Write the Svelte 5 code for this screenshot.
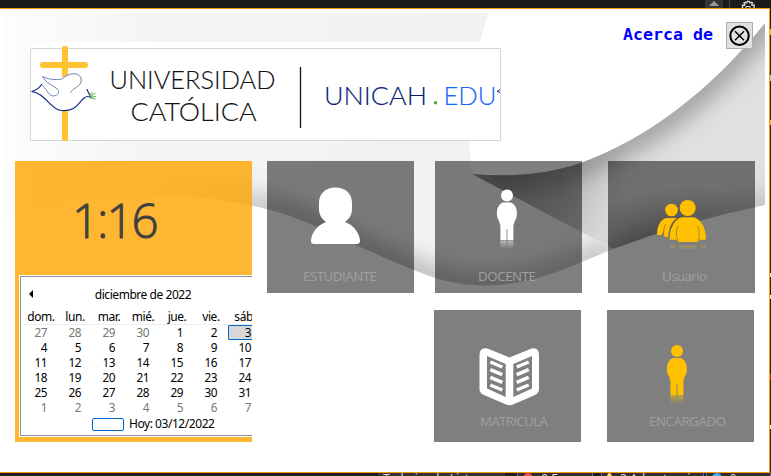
<script>
  const weekdays = ['dom.', 'lun.', 'mar.', 'mié.', 'jue.', 'vie.', 'sáb.'];
  const days = [27, 28, 29, 30, ...Array.from({ length: 31 }, (_, i) => i + 1), 1, 2, 3, 4, 5, 6, 7];
  const tiles = [
    { label: 'ESTUDIANTE', icon: 'student', x: 36, y: 120, width: 74 },
    { label: 'DOCENTE', icon: 'person', x: 43, y: 120, width: 58 },
    { label: 'Usuario', icon: 'users', x: 54, y: 120, width: 45 },
    { label: 'MATRICULA', icon: 'book', x: 46, y: 116, width: 68 },
    { label: 'ENCARGADO', icon: 'guardian', x: 42, y: 116, width: 77 }
  ];
</script>

{#snippet person(color, id)}
  <defs>
    <linearGradient id={id} x1="0" y1="0" x2="0" y2="1">
      <stop offset="0" stop-color={color} stop-opacity=".5" /><stop offset="1" stop-color={color} stop-opacity="0" />
    </linearGradient>
  </defs>
  <g fill={color}>
    <circle cx="72" cy="34.500" r="6" />
    <path d="M68 41.500h8q6 3 6 11q0 5-2.500 8l-.5 3h-.6v15.500h-6v-11h-.8v11h-6.200v-15.500h-.6l-.5-3q-2.500-3-2.500-8q0-8 5.700-11z" />
  </g>
  <path d="M65.400 79.500h6.200v8h-6.200zM72.400 79.500h6v8h-6z" fill="url(#{id})" />
{/snippet}

<div class="screen">
  <div class="topbar">
    <span class="scroll"><i></i></span>
    <span class="gear">
      <svg width="14" height="8" viewBox="0 0 14 8"><path d="M1.500 8V5l2 .3.5-.8-1-1.700 1.500-.6 1.200.6.8-1.500h1.600l.8 1.500 1.200-.6 1.500.6-1 1.700.5.8 2-.3V8" fill="none" stroke="#ddd" stroke-width="1.300" /><path d="M5 8V6.500h4V8" fill="none" stroke="#ddd" /></svg>
    </span>
  </div>
  <div class="middle">
    <main>
      <svg class="backdrop" width="769" height="463" viewBox="0 9 769 463">
        <defs>
          <linearGradient id="paper"><stop offset="0" stop-color="#fdfdfd" /><stop offset=".25" stop-color="#f4f4f4" /><stop offset="1" stop-color="#f1f1f1" /></linearGradient>
          <linearGradient id="edge" gradientUnits="userSpaceOnUse" x1="150" y1="0" x2="620" y2="0"><stop offset="0" stop-color="#777" stop-opacity="0" /><stop offset=".3" stop-color="#777" stop-opacity=".45" /><stop offset="1" stop-color="#777" stop-opacity=".35" /></linearGradient>
          <radialGradient id="fold" gradientUnits="userSpaceOnUse" cx="505" cy="175" r="125"><stop offset="0" stop-color="#777" stop-opacity=".62" /><stop offset=".5" stop-color="#777" stop-opacity=".36" /><stop offset="1" stop-color="#777" stop-opacity="0" /></radialGradient>
          <radialGradient id="corner" gradientUnits="userSpaceOnUse" cx="0" cy="0" r="1" gradientTransform="translate(638 246) rotate(-18) scale(115 52)"><stop offset="0" stop-color="#555" stop-opacity=".5" /><stop offset=".45" stop-color="#555" stop-opacity=".25" /><stop offset="1" stop-color="#555" stop-opacity="0" /></radialGradient>
          <filter id="soft" filterUnits="userSpaceOnUse" x="380" y="-60" width="500" height="450"><feGaussianBlur stdDeviation="13" /></filter>
          <filter id="soft2" filterUnits="userSpaceOnUse" x="0" y="0" width="769" height="400"><feGaussianBlur stdDeviation="10" /></filter>
          <clipPath id="ribbon"><path d="M3 13H488L480 42L469 141L472 174L613 249Q585 261 554 273Q490 295 435 278Q400 266 315 226C235 190 110 183 3 222Z" /></clipPath>
          <clipPath id="rightclip"><path d="M765 23C723 75 665 129 591 159Q540 180 472 174L613 249Q690 220 765 205Z" /></clipPath>
        </defs>
        <g clip-path="url(#ribbon)">
          <path d="M3 13H640V300H3Z" fill="url(#paper)" />
          <path d="M613 249Q585 261 554 273Q490 295 435 278Q400 266 315 226Q240 192 150 192" stroke="url(#edge)" stroke-width="26" fill="none" filter="url(#soft2)" />
        </g>
        <g clip-path="url(#rightclip)">
          <path d="M460 13H765V260H460Z" fill="#e1e1e1" />
          <path d="M460 13H765V260H460Z" fill="url(#fold)" />
          <path d="M775 10C723 75 665 129 591 159Q540 180 472 174" stroke="#555" stroke-opacity=".65" stroke-width="20" fill="none" filter="url(#soft)" />
          <path d="M608 150H765V260H608Z" fill="url(#corner)" />
          <path d="M613 255Q690 225 775 205" stroke="#777" stroke-opacity=".4" stroke-width="25" fill="none" filter="url(#soft)" />
        </g>
      </svg>

      <header>
        <svg class="logo" width="471" height="99" viewBox="30 42 471 99">
          <path d="M30 42H501V141H30Z" fill="#fff" />
          <path d="M65 49V78M65 111V139.500M43 65H85" stroke="#ffc233" stroke-width="6" stroke-linecap="round" fill="none" />
          <path d="M62 77Q68 76 73 74Q80 75 81 81Q81 88 70 93V110H60Z" fill="#fff" />
          <g fill="none" stroke-linecap="round">
            <path d="M42.500 76.500C47 79 55 80.500 62 79C67 74 78 70.500 81 78C83 87 73 87 70.500 92.500" stroke="#7184b9" />
            <path d="M42.500 76.500C45 82 50 84 56 88C61 91 58 96 53 96C48 95 46 88 41.500 84.500" stroke="#7184b9" />
            <path d="M41.500 84.500Q38 90 31.500 91.500C45 93 51 110 61 110.500C76 112 78 103 84 98Q88 95 91 98L87 89.500" stroke="#102d83" stroke-width="1.200" />
            <path d="M91 97Q92 94 95 93.500M90 97L95.500 96.500M91 98L95 99M90 95L92 92.500" stroke="#67bd54" stroke-width="1.100" />
          </g>
          <path d="M30.500 48.500H500.500V140.500H30.500Z" fill="none" stroke="#d6d6d6" />
          <path d="M65 46.500V50M65 139V142" stroke="#ffc233" stroke-width="6" opacity=".7" />
          <path d="M300.500 67V128" stroke="#111" stroke-width="1.300" />
          <g class="brand">
            <text x="109.500" y="88.500" textLength="166" lengthAdjust="spacingAndGlyphs">UNIVERSIDAD</text>
            <text x="130.500" y="120.500" textLength="126" lengthAdjust="spacingAndGlyphs">CATÓLICA</text>
            <text x="324" y="104.500" textLength="103" lengthAdjust="spacingAndGlyphs" class="navy">UNICAH</text>
            <circle cx="435.500" cy="102.700" r="1.700" fill="#4aa72e" />
            <text x="443.500" y="105" textLength="53" lengthAdjust="spacingAndGlyphs" class="blue-text">EDU</text>
          </g>
          <path d="M500 89.500L497 91.500L500 92.500" fill="none" stroke="#102d83" />
        </svg>
        <span class="about">Acerca de</span>
        <button aria-label="Cerrar">
          <svg width="25" height="25" viewBox="0 0 25 25"><circle cx="12.500" cy="12.800" r="9.200" fill="none" stroke="#000" stroke-width="2" /><path d="M8 8.300L17 17.300M17 8.300L8 17.300" stroke="#000" stroke-width="1.500" /></svg>
        </button>
      </header>

      <div class="content">
        <section class="clockpanel">
          <div class="clock">1:16</div>
          <div class="calendar">
            <div class="month"><i></i><span>diciembre de 2022</span></div>
            <div class="week">{#each weekdays as day}<span>{day}</span>{/each}</div>
            <div class="days">
              {#each days as day, i}<span class:muted={i < 4 || i > 34} class:selected={i === 6}>{day}</span>{/each}
            </div>
            <div class="today"><i></i><span>Hoy: 03/12/2022</span></div>
          </div>
        </section>

        <div class="tiles">
          {#each tiles as tile}
            <div class="tile {tile.icon}">
              <svg width="147" height="132" viewBox="0 0 147 132">
                {#if tile.icon === 'student'}
                  <path d="M68.500 26.500C79 26.500 85 33 85 42V48C85 54 82 58 78 61C87 64 93 73 93 80Q93 83 90 83H47Q44 83 44 80C44 73 50 64 59 61C55 58 52 54 52 48V42C52 33 58 26.500 68.500 26.500Z" fill="#fff" />
                {:else if tile.icon === 'person'}
                  {@render person('#fff', 'fadeWhite')}
                {:else if tile.icon === 'guardian'}
                  <g transform="translate(-2 6.500)">{@render person('#ffc000', 'fadeGold')}</g>
                {:else if tile.icon === 'users'}
                  <g fill="#ffc000">
                    <circle cx="63.500" cy="49" r="6.300" /><circle cx="79.700" cy="47" r="8" />
                    <path d="M58 57H69Q61.500 62 60 76H56.500L55.300 70L53.500 74H49C49 65 52 59 58 57Z" />
                    <path d="M73.500 56.300H86C94 59 98 68 98 78.700H91.800L90 81H71L68 78.700H61.700C61.700 68 65.500 59 73.500 56.300Z" />
                    <path d="M62 84H67V87H62ZM70 84H90L86 88H74ZM93 84H98V87H93Z" opacity=".18" />
                  </g>
                  <path d="M57.500 63Q55.500 66 55.300 75M70 65Q68 68 68.500 75Q69 78 70.500 81.500M89.500 65Q91.500 68 91.200 75Q91 78 89.500 81.500M69 57Q61 62 60.500 76" fill="none" stroke="#a58423" stroke-width=".9" />
                {:else}
                  <path fill-rule="evenodd" fill="#fff" d="M53.500 38.500L75.500 47.500L97.500 38.500Q105 37 105 45V79Q105 83 101 85L79 94.500Q75.500 96 72 94.500L50 85Q45.500 83 45.500 79V45Q45.500 37 53.500 38.500ZM53 46V78.500L71.700 87V54ZM98 46L79.300 54V87L98 78.500Z" />
                  <path d="M56.300 52L68.300 57M56.300 59.700L68.300 64.700M56.300 67.300L68.300 72.300M56.300 75L68.300 80M94.700 52L82.700 57M94.700 59.700L82.700 64.700M94.700 67.300L82.700 72.300M94.700 75L82.700 80" stroke="#fff" stroke-width="3.500" />
                {/if}
                <text class="label" textLength={tile.width} x={tile.x} y={tile.y}>{tile.label}</text>
              </svg>
            </div>
          {/each}
        </div>
      </div>
    </main>
    <aside></aside>
  </div>
  <footer>
    <span class="tab">Trabajando Listo</span>
    <span class="status red"><i></i>0 Errores</span>
    <span class="status yellow"><i></i>2 Advertencias</span>
    <span class="status blue"><i></i>0</span>
  </footer>
</div>

<style>
  :global(body) { overflow: hidden; }
  .screen { width: 771px; height: 476px; display: flex; flex-direction: column; overflow: hidden; background: #1c1c1c; }
  .topbar { height: 8px; flex: none; display: flex; background: #1b1b1b; overflow: hidden; }
  .scroll { width: 18px; margin-left: 705px; background: #343434; }
  .scroll i { display: block; width: 0; margin: 1px 4px; border: 5px solid transparent; border-top: 0; border-bottom-color: #999; }
  .gear { margin-left: 6px; padding-left: 11px; border-left: 1px solid #444; width: 28px; }
  .gear svg { display: block; }
  .middle { height: 465px; flex: none; display: flex; }
  main { width: 770px; box-sizing: border-box; border: 1px solid #f59a0c; border-left: 0; background: #fff; position: relative; }
  aside { flex: 1; background: linear-gradient(#1c1c1c 0 21px, #ffc267 21px 27px, #222 27px 67px, #8bdfff 67px 73px, #2b2420 73px 112px, #ffac48 112px 117px, #222 117px 265px, #eee 265px 269px, #332712 269px 287px, #eee 287px 291px, #222 291px 366px, #b62f35 366px 372px, #222 372px 417px, #fff 417px 421px, #292331 421px); }
  .backdrop { position: absolute; left: 0; top: 0; }
  header { display: flex; height: 132px; position: relative; }
  .logo { margin: 33px 0 0 30px; flex: none; }
  .brand { font-family: Lato, "Open Sans", sans-serif; font-weight: 300; font-size: 25px; fill: #111; stroke: #111; stroke-width: .1px; }
  .brand .navy { fill: #071d75; stroke: #071d75; }
  .brand .blue-text { fill: #1464ff; stroke: #1464ff; }
  .brand circle { stroke: none; }
  .about { margin: 15px 0 0 122px; width: 91px; font: bold 16.6px/22px "DejaVu Sans Mono", monospace; color: #00f; white-space: nowrap; }
  button { width: 27px; height: 27px; margin: 13px 0 0 12px; padding: 0; border: 1px solid #adadad; background: #e1e1e1; }
  button svg { display: block; }
  .content { position: relative; display: flex; gap: 15px; padding: 20px 0 0 15px; }
  .clockpanel { width: 237px; height: 281px; flex: none; overflow: hidden; background: rgba(255, 165, 0, .8); }
  .clock { height: 114px; box-sizing: border-box; padding: 27px 0 0 57px; font: 300 47.5px/64px "Open Sans", sans-serif; letter-spacing: -2px; color: #404040; -webkit-text-stroke: .9px #404040; }
  .calendar { width: 251px; height: 160px; box-sizing: border-box; margin: 1px 0 0 5px; border: 1px solid #929292; outline: 1px solid #fff; background: #fff; padding: 8px 0 0 2px; font: 12px/15px "Noto Sans", sans-serif; letter-spacing: -.45px; color: #000; }
  .month { display: flex; height: 21px; line-height: 20px; align-items: flex-start; }
  .month i { width: 0; border: 4px solid transparent; border-left: 0; border-right-color: #000; margin: 5px 0 0 6px; }
  .month span { width: 124px; margin-left: 48px; text-align: center; white-space: nowrap; }
  .week { display: grid; grid-template-columns: repeat(7, 34px); height: 18px; width: 238px; line-height: 20px; text-align: center; border-bottom: 1px solid #eee; box-sizing: border-box; margin: 1px 0 0 1px; }
  .days { display: grid; grid-template-columns: 24px repeat(6, 34px); grid-auto-rows: 15px; text-align: right; font-size: 11.8px; }
  .days .muted { color: #777; }
  .days .selected { border: 1px solid #0067c8; border-right: 0; border-radius: 2px 0 0 2px; background: #d8d8d8; line-height: 13px; margin: 0 -2px 0 11px; padding-right: 2px; }
  .today { display: flex; padding-left: 69px; line-height: 18px; gap: 5px; }
  .today i { box-sizing: border-box; width: 32px; height: 13px; margin-top: 3px; border: 1px solid #0067c8; border-radius: 2px; }
  .tiles { display: grid; grid-template-columns: 147px 147px 147px; grid-template-rows: 132px 132px; column-gap: 21px; row-gap: 17px; }
  .tile { width: 147px; height: 132px; background: rgba(0, 0, 0, .5); }
  .tile svg { display: block; }
  .users { margin-left: 5px; }
  .book { grid-column: 2; margin-left: -1px; }
  .guardian { grid-column: 3; margin-left: 4px; }
  .label { font: 13.3px "Open Sans", sans-serif; fill: #a0a0a0; }
  footer { height: 3px; overflow: hidden; display: flex; background: #201e1e; color: #ddd; font: 12px/12px "Noto Sans", sans-serif; }
  .tab { margin-left: 378px; width: 150px; padding-left: 5px; box-sizing: border-box; background: #363332; }
  .status { display: flex; width: 76px; box-sizing: border-box; padding-left: 5px; gap: 8px; margin-left: 12px; background: #302e2e; border-left: 1px solid #6660cc; border-right: 1px solid #6660cc; white-space: nowrap; }
  .status i { width: 10px; height: 10px; border-radius: 50%; background: #ed444e; flex: none; }
  .yellow { width: 108px; margin-left: 8px; }
  .yellow i { background: #ffd57b; width: 5px; }
  .blue { margin-left: 2px; }
  .blue i { background: #48a4fc; }
</style>
